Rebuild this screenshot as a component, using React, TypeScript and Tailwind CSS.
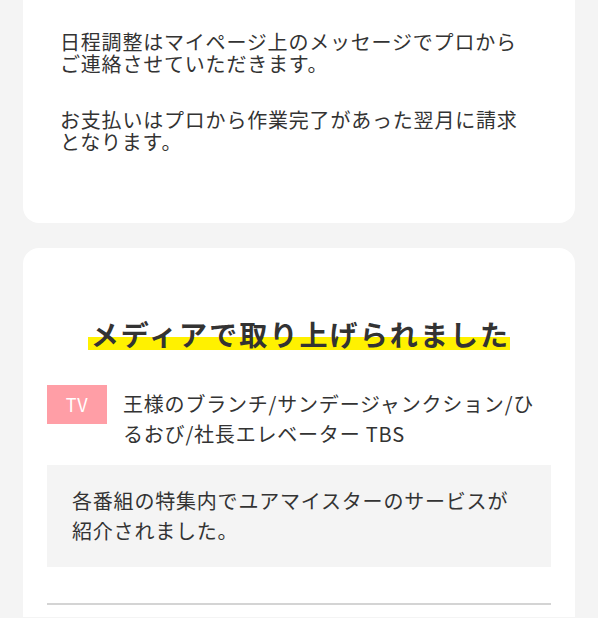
const App = () => {
  return (
    <main
      className="min-h-[618px] bg-[#f4f4f4] px-[23px] text-[#333] tracking-[0.05em]"
      style={{ fontFamily: '"Noto Sans CJK JP", "Noto Sans", sans-serif' }}
    >
      {/* flow card (top is scrolled off) */}
      <section className="rounded-b-2xl bg-white pl-[37px] pr-[46px] pt-[31px] pb-[70px] text-[20px] leading-[22px]">
        <p>日程調整はマイページ上のメッセージでプロからご連絡させていただきます。</p>
        <p className="mt-[34px]">お支払いはプロから作業完了があった翌月に請求となります。</p>
      </section>

      {/* media */}
      <section className="mt-[25px] rounded-t-2xl bg-white px-6 pt-[67px] pb-3">
        <h2 className="text-center text-[28px] font-bold leading-[39px] tracking-[0.075em]">
          <span className="bg-[linear-gradient(transparent_57%,#fff100_57%,#fff100_90%,transparent_90%)] pl-[3px]">
            メディアで取り上げられました
          </span>
        </h2>

        <div className="mt-[31px] flex items-start gap-4">
          <div className="flex h-[39px] w-[60px] shrink-0 items-center justify-center bg-[#ff9ea6] text-[18px] text-white">
            TV
          </div>
          <p className="mt-[4px] text-[20px] leading-[30px]">
            王様のブランチ/サンデージャンクション/ひるおび/社長エレベーター TBS
          </p>
        </div>

        <div className="mt-[16px] bg-[#f4f4f4] px-[25px] pt-[21px] pb-[21px] text-[20px] leading-[30px]">
          各番組の特集内でユアマイスターのサービスが紹介されました。
        </div>

        <div className="mt-[36px] border-t-2 border-[#d4d4d4]"></div>
      </section>
    </main>
  );
};

export default App;
